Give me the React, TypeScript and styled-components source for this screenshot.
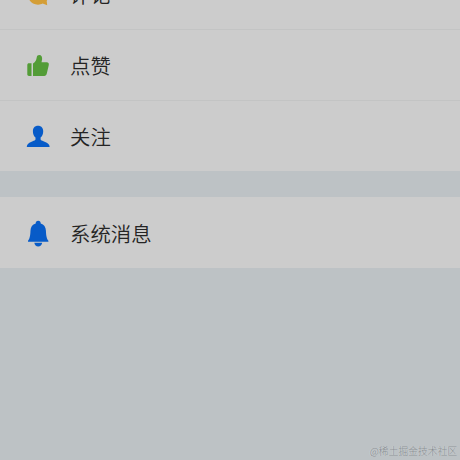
import React from "react";
import styled, { createGlobalStyle } from "styled-components";

const GlobalStyle = createGlobalStyle`
  * { box-sizing: border-box; }
  body { margin: 0; background: #bdc2c5; }
`;

const Screen = styled.main`
  position: relative;
  width: 460px;
  height: 460px;
  overflow: hidden;
  background: #bdc2c5;
  font-family: "Noto Sans CJK SC", sans-serif;
`;

const Group = styled.section<{ $scrolled?: boolean }>`
  display: flex;
  flex-direction: column;
  margin-top: ${(p) => (p.$scrolled ? "-42px" : "26px")};
  background: #cccccc;
`;

const Row = styled.div<{ $divided?: boolean }>`
  display: flex;
  align-items: center;
  gap: 19px;
  height: 71px;
  padding: ${(p) => (p.$divided ? "0 25px" : "1px 25px 0")};
  border-top: ${(p) => (p.$divided ? "1px solid #c3c4c4" : "0")};
`;

const IconBox = styled.svg`
  flex: none;
  width: 26px;
  height: 28px;
  margin-top: 1px;
`;

const Label = styled.span`
  color: #242424;
  font-size: 20.4px;
  font-weight: 350;
  line-height: 30px;
  white-space: nowrap;
`;

const Watermark = styled.div`
  position: absolute;
  right: 3px;
  bottom: 2px;
  color: #868b8f;
  font-size: 9.8px;
  font-weight: 300;
  line-height: 14px;
  white-space: nowrap;
  text-shadow: -0.5px -0.5px 0 #dcdee0;
`;

const CommentIcon = () => (
  <IconBox viewBox="0 0 26 28">
    <path fill="#d49e36" d="M13 2.500C7 2.500 2.500 6.800 2.500 12.700S7 23.700 13 23.700c2 0 3.300-.5 4.700-1.200l4.500 1.700-.5-4.200c1.200-2 1.800-4.200 1.800-7C23.500 6.800 19 2.500 13 2.500Z" />
  </IconBox>
);

const LikeIcon = () => (
  <IconBox viewBox="0 0 26 28">
    <path fill="#539c37" d="M4 11.200h2.500V24H4c-1.100 0-1.700-.6-1.700-1.700v-9.400c0-1.100.6-1.700 1.700-1.700Z" />
    <path fill="#539c37" d="M8 24V11.600c2.700-1.600 3.300-3.800 3.700-6.100.3-1.600 1.200-2.400 2.500-2.400 2.200 0 3.200 1.900 2.900 4.400l-.6 2.800h5.200c1.600 0 2.400 1.100 2.100 2.600l-2 8.700c-.3 1.600-1.200 2.400-2.600 2.400Z" />
  </IconBox>
);

const FollowIcon = () => (
  <IconBox viewBox="0 0 26 28">
    <path fill="#075bc8" d="M13 2.700c-3.200 0-5.100 2.200-5.100 5.500 0 2.700 1 5.100 2.600 6.300v2c-.4 1.200-4.700 2.200-7 3.900-1.100.9-1.700 2-1.700 3.700h22.800c0-1.700-.6-2.900-1.800-3.700-2.400-1.700-6.700-2.700-7.200-3.900v-2c1.600-1.200 2.600-3.600 2.600-6.300 0-3.300-2-5.500-5.200-5.500Z" />
  </IconBox>
);

const BellIcon = () => (
  <IconBox viewBox="0 0 26 28">
    <path fill="#075bc8" d="M13.200.8c-1.600 0-2.500 1-2.500 2.600-3.300.9-5.100 3.500-5.200 7.200-.2 5.600-.9 8.400-2.500 10.200v.9h20.400v-.9c-1.600-1.800-2.300-4.600-2.500-10.200-.1-3.700-1.900-6.300-5.200-7.200 0-1.600-.9-2.600-2.500-2.600ZM9.300 22.800h7.900c-.4 2.200-1.900 3.700-4 3.700s-3.500-1.500-3.900-3.700Z" />
  </IconBox>
);

export default function App() {
  return (
    <>
      <GlobalStyle />
      <Screen>
        <Group $scrolled>
          <Row>
            <CommentIcon />
            <Label>评论</Label>
          </Row>
          <Row $divided>
            <LikeIcon />
            <Label>点赞</Label>
          </Row>
          <Row $divided>
            <FollowIcon />
            <Label>关注</Label>
          </Row>
        </Group>
        <Group>
          <Row>
            <BellIcon />
            <Label>系统消息</Label>
          </Row>
        </Group>
        <Watermark>@稀土掘金技术社区</Watermark>
      </Screen>
    </>
  );
}
